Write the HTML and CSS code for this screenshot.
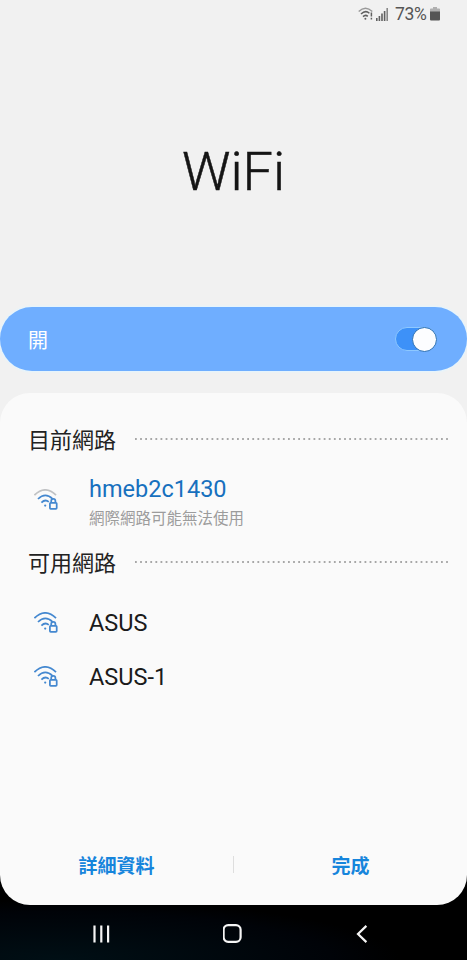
FILE: index.html
```
<!DOCTYPE html>
<html lang="zh-Hant">
<head>
<meta charset="utf-8">
<title>WiFi</title>
<link rel="stylesheet" href="styles.css">
</head>
<body>
<div class="phone">
  <main class="screen">
    <header class="status">
      <svg class="status-wifi" width="16" height="14" viewBox="0 0 16 14" fill="none" stroke="#606060" stroke-width="1.5">
        <path d="M.7 4.5Q7.5-2 14.3 4.5" stroke="#999"/><path d="M3 7Q7.5 2.7 11.4 6.3M5 9.6Q7.5 7.2 9.8 9.4"/><circle cx="7.4" cy="11.7" r="1" fill="#606060" stroke="none"/><path d="M13.4 5.5v4M13.4 10.8v1.6"/>
      </svg>
      <svg class="status-signal" width="12" height="13" viewBox="0 0 12 13" fill="#606060">
        <path d="M0 10h1.6v3H0zM2.6 8h1.6v5H2.6zM5.2 5.5h1.6V13H5.2zM7.8 3h1.6v10H7.8z"/><path d="M10.4 0H12v13h-1.6z" fill="#888"/>
      </svg>
      <span class="percent">73%</span>
      <svg class="status-battery" width="10" height="14" viewBox="0 0 10 14">
        <path d="M3 0h4v1.5h2.2q.8 0 .8.8V5H0V2.3q0-.8.8-.8H3z" fill="#b0b0b0"/><path d="M0 4.5h10v8q0 1-1 1H1q-1 0-1-1z" fill="#555"/>
      </svg>
    </header>
    <h1 class="title">WiFi</h1>
    <section class="master">
      <span>開</span>
      <span class="switch"><span class="knob"></span></span>
    </section>
    <section class="card">
      <div class="heading"><h2>目前網路</h2><svg class="dots" width="314" height="2"><path d="M0 1H313"/></svg></div>
      <div class="network current">
        <svg class="wifi weak" viewBox="0 0 24 22"><path class="outer" d="M.4 6.2Q11.2-4.4 22 6.2"/><path d="M4 10Q11.2 2.8 18.6 9.8M7.4 13.6Q11.2 9.8 14.8 12.8"/><circle cx="11.2" cy="16.6" r="1.1"/><rect x="15.9" y="13.8" width="6.8" height="6" rx=".8"/><path d="M17.2 14v-2a2.1 2.1 0 0 1 4.2 0V14"/></svg>
        <div><div class="name">hmeb2c1430</div><div class="note">網際網路可能無法使用</div></div>
      </div>
      <div class="heading available"><h2>可用網路</h2><svg class="dots" width="314" height="2"><path d="M0 1H313"/></svg></div>
      <div class="network">
        <svg class="wifi" viewBox="0 0 24 22"><path class="outer" d="M.4 6.2Q11.2-4.4 22 6.2"/><path d="M4 10Q11.2 2.8 18.6 9.8M7.4 13.6Q11.2 9.8 14.8 12.8"/><circle cx="11.2" cy="16.6" r="1.1"/><rect x="15.9" y="13.8" width="6.8" height="6" rx=".8"/><path d="M17.2 14v-2a2.1 2.1 0 0 1 4.2 0V14"/></svg>
        <div class="name">ASUS</div>
      </div>
      <div class="network">
        <svg class="wifi" viewBox="0 0 24 22"><path class="outer" d="M.4 6.2Q11.2-4.4 22 6.2"/><path d="M4 10Q11.2 2.8 18.6 9.8M7.4 13.6Q11.2 9.8 14.8 12.8"/><circle cx="11.2" cy="16.6" r="1.1"/><rect x="15.9" y="13.8" width="6.8" height="6" rx=".8"/><path d="M17.2 14v-2a2.1 2.1 0 0 1 4.2 0V14"/></svg>
        <div class="name">ASUS-1</div>
      </div>
      <footer class="actions"><span class="action">詳細資料</span><i class="divider"></i><span class="action">完成</span></footer>
    </section>
  </main>
  <nav class="nav">
    <svg width="17" height="18" viewBox="0 0 17 18"><path d="M1.5 .5v17M8.3 .5v17M15.1 .5v17"/></svg>
    <svg width="20" height="19" viewBox="0 0 20 19"><rect x=".6" y="1.2" width="17" height="16.6" rx="4.6"/></svg>
    <svg width="12" height="18" viewBox="0 0 12 18"><path d="M10.4 .9 2 9l8.4 8.1"/></svg>
  </nav>
</div>
</body>
</html>
```

FILE: styles.css
```
* { box-sizing: border-box; }
body {
  margin: 0;
  background: #000;
  font-family: Roboto, "Noto Sans CJK TC", sans-serif;
}
.phone {
  width: 467px;
  height: 960px;
  overflow: hidden;
  display: flex;
  flex-direction: column;
  background: radial-gradient(ellipse 340px 60px at 60px 960px, #000f15, #000308 80%, #000);
}
.screen {
  height: 905px;
  display: flex;
  flex-direction: column;
  background: linear-gradient(#f1f1f1 0 800px, transparent 800px);
}
.status {
  height: 28px;
  padding-right: 27px;
  display: flex;
  align-items: center;
  justify-content: flex-end;
}
.status-wifi { margin-right: 2px; }
.status-signal { margin-right: 7px; }
.status-battery { margin-left: 3px; }
.percent {
  width: 32px;
  font-size: 17.5px;
  letter-spacing: -.3px;
  line-height: 28px;
  color: #555;
}
.title {
  margin: 0;
  height: 279px;
  padding-top: 112px;
  font-size: 54px;
  font-weight: 300;
  line-height: 64px;
  text-align: center;
  color: #151515;
  -webkit-text-stroke: .5px #151515;
}
.master {
  height: 64px;
  flex: none;
  padding: 0 30px 0 28px;
  border-radius: 32px;
  display: flex;
  align-items: center;
  justify-content: space-between;
  background: #6faeff;
  box-shadow: 0 0 2px 1px #e2f5ff;
  color: #fff;
  font-size: 20px;
}
.switch {
  width: 42px;
  height: 24px;
  border: 1px solid #8ec8ff;
  border-radius: 12px;
  display: flex;
  align-items: center;
  justify-content: flex-end;
  background: #3d91f8;
}
.knob {
  flex: none;
  width: 25px;
  height: 25px;
  margin-right: -1px;
  border: 1px solid #2b70b5;
  border-radius: 50%;
  background: #fcfdff;
}
.card {
  margin-top: 22px;
  height: 512px;
  flex: none;
  border-radius: 30px;
  background: #fafafa;
  display: flex;
  flex-direction: column;
}
.heading {
  height: 32px;
  margin: 32px 18px 0 28px;
  display: flex;
  align-items: center;
}
.heading h2 {
  width: 107px;
  margin: 0;
  font-size: 22px;
  font-weight: 400;
  line-height: 32px;
  color: #222;
}
.dots {
  flex: none;
  margin-top: -4px;
  stroke: #8c8c8c;
  stroke-width: 1.7;
  stroke-dasharray: 1.8 3.3;
}
.network {
  height: 54px;
  padding-left: 34px;
  display: flex;
  align-items: center;
}
.current { height: 75px; padding-top: 14px; }
.current .wifi { margin-top: -3px; }
.available { margin-top: 16px; }
.available + .network { margin-top: 16px; }
.name {
  font-size: 23.5px;
  line-height: 30px;
  color: #1b1b1b;
}
.current .name { color: #1770be; }
.note {
  font-size: 15.5px;
  line-height: 22px;
  margin-top: 4px;
  color: #9c9c9c;
}
.wifi {
  width: 24px;
  height: 22px;
  margin-top: -1px;
  margin-right: 31px;
  flex: none;
  fill: none;
  stroke: #4488d0;
  stroke-width: 1.75;
}
.wifi circle { fill: #4488d0; stroke: none; }
.weak .outer { stroke: #c0c2c4; }
.actions {
  height: 40px;
  margin-top: auto;
  margin-bottom: 21px;
  display: flex;
  align-items: center;
}
.action {
  flex: 1;
  text-align: center;
  font-size: 19px;
  font-weight: 700;
  color: #1685dc;
}
.divider { width: 1px; height: 17px; background: #dedede; }
.nav {
  height: 55px;
  padding: 2px 99px 0 93px;
  display: flex;
  align-items: center;
  justify-content: space-between;
}
.nav svg { fill: none; stroke: #f5f5f5; stroke-width: 2.2; }
```
